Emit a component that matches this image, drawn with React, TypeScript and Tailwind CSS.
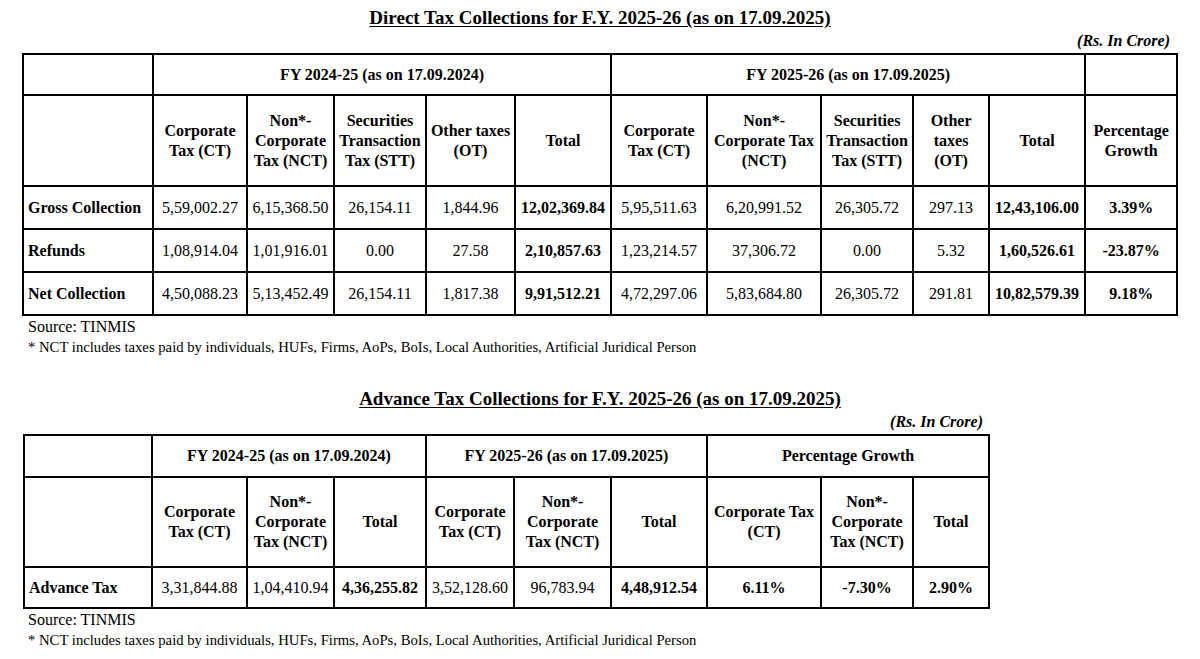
const serif = { fontFamily: '"Liberation Serif", "Times New Roman", serif' };

const td = 'border-2 border-black text-center align-middle p-0';
const th = 'border-2 border-black text-center align-middle font-bold p-0 leading-[20px]';

const directRows = [
    {
        label: 'Gross Collection',
        a: ['5,59,002.27', '6,15,368.50', '26,154.11', '1,844.96'],
        aTotal: '12,02,369.84',
        b: ['5,95,511.63', '6,20,991.52', '26,305.72', '297.13'],
        bTotal: '12,43,106.00',
        growth: '3.39%',
    },
    {
        label: 'Refunds',
        a: ['1,08,914.04', '1,01,916.01', '0.00', '27.58'],
        aTotal: '2,10,857.63',
        b: ['1,23,214.57', '37,306.72', '0.00', '5.32'],
        bTotal: '1,60,526.61',
        growth: '-23.87%',
    },
    {
        label: 'Net Collection',
        a: ['4,50,088.23', '5,13,452.49', '26,154.11', '1,817.38'],
        aTotal: '9,91,512.21',
        b: ['4,72,297.06', '5,83,684.80', '26,305.72', '291.81'],
        bTotal: '10,82,579.39',
        growth: '9.18%',
    },
];

function Notes() {
    return (
        <div className="pl-[28px] leading-[21px] text-black">
            <p className="text-[16px]">Source: TINMIS</p>
            <p className="text-[14.7px]">* NCT includes taxes paid by individuals, HUFs, Firms, AoPs, BoIs, Local Authorities, Artificial Juridical Person</p>
        </div>
    );
}

export default function App() {
    return (
        <div className="w-[1200px] h-[659px] bg-white text-black overflow-hidden" style={serif}>
            {/* Direct tax */}
            <h1 className="pt-[7px] text-center text-[19px] leading-[22px] font-bold underline underline-offset-2">
                Direct Tax Collections for F.Y. 2025-26 (as on 17.09.2025)
            </h1>
            <div className="w-[1176px] text-right text-[16px] leading-[24px] font-bold italic pr-[6px]">(Rs. In Crore)</div>
            <table className="ml-[22px] w-[1154px] table-fixed border-collapse text-[16px]">
                <colgroup>
                    <col className="w-[130px]" />
                    <col className="w-[94px]" />
                    <col className="w-[87px]" />
                    <col className="w-[92px]" />
                    <col className="w-[89px]" />
                    <col className="w-[96px]" />
                    <col className="w-[96px]" />
                    <col className="w-[114px]" />
                    <col className="w-[92px]" />
                    <col className="w-[76px]" />
                    <col className="w-[96px]" />
                    <col className="w-[92px]" />
                </colgroup>
                <thead>
                    <tr className="h-[41px]">
                        <th className={th}></th>
                        <th className={th} colSpan={5}>FY 2024-25 (as on 17.09.2024)</th>
                        <th className={th} colSpan={5}>FY 2025-26 (as on 17.09.2025)</th>
                        <th className={th}></th>
                    </tr>
                    <tr className="h-[91px]">
                        <th className={th}></th>
                        <th className={th}>Corporate<br />Tax (CT)</th>
                        <th className={th}>Non*-<br />Corporate<br />Tax (NCT)</th>
                        <th className={th}>Securities<br />Transaction<br />Tax (STT)</th>
                        <th className={th}>Other taxes<br />(OT)</th>
                        <th className={th}>Total</th>
                        <th className={th}>Corporate<br />Tax (CT)</th>
                        <th className={th}>Non*-<br />Corporate Tax<br />(NCT)</th>
                        <th className={th}>Securities<br />Transaction<br />Tax (STT)</th>
                        <th className={th}>Other<br />taxes<br />(OT)</th>
                        <th className={th}>Total</th>
                        <th className={th}>Percentage<br />Growth</th>
                    </tr>
                </thead>
                <tbody>
                    {directRows.map((r) => (
                        <tr key={r.label} className="h-[43px]">
                            <td className={`${td} text-left font-bold pl-[4px]`}>{r.label}</td>
                            {r.a.map((v, i) => (
                                <td key={'a' + i} className={td}>{v}</td>
                            ))}
                            <td className={`${td} font-bold`}>{r.aTotal}</td>
                            {r.b.map((v, i) => (
                                <td key={'b' + i} className={td}>{v}</td>
                            ))}
                            <td className={`${td} font-bold`}>{r.bTotal}</td>
                            <td className={`${td} font-bold`}>{r.growth}</td>
                        </tr>
                    ))}
                </tbody>
            </table>
            <Notes />

            {/* Advance tax */}
            <h2 className="mt-[30px] text-center text-[19px] leading-[22px] font-bold underline underline-offset-2">
                Advance Tax Collections for F.Y. 2025-26 (as on 17.09.2025)
            </h2>
            <div className="w-[988px] text-right text-[16px] leading-[24px] font-bold italic pr-[5px]">(Rs. In Crore)</div>
            <table className="ml-[23px] w-[965px] table-fixed border-collapse text-[16px]">
                <colgroup>
                    <col className="w-[128px]" />
                    <col className="w-[95px]" />
                    <col className="w-[87px]" />
                    <col className="w-[92px]" />
                    <col className="w-[88px]" />
                    <col className="w-[97px]" />
                    <col className="w-[96px]" />
                    <col className="w-[114px]" />
                    <col className="w-[92px]" />
                    <col className="w-[76px]" />
                </colgroup>
                <thead>
                    <tr className="h-[42px]">
                        <th className={th}></th>
                        <th className={th} colSpan={3}>FY 2024-25 (as on 17.09.2024)</th>
                        <th className={th} colSpan={3}>FY 2025-26 (as on 17.09.2025)</th>
                        <th className={th} colSpan={3}>Percentage Growth</th>
                    </tr>
                    <tr className="h-[90px]">
                        <th className={th}></th>
                        <th className={th}>Corporate<br />Tax (CT)</th>
                        <th className={th}>Non*-<br />Corporate<br />Tax (NCT)</th>
                        <th className={th}>Total</th>
                        <th className={th}>Corporate<br />Tax (CT)</th>
                        <th className={th}>Non*-<br />Corporate<br />Tax (NCT)</th>
                        <th className={th}>Total</th>
                        <th className={th}>Corporate Tax<br />(CT)</th>
                        <th className={th}>Non*-<br />Corporate<br />Tax (NCT)</th>
                        <th className={th}>Total</th>
                    </tr>
                </thead>
                <tbody>
                    <tr className="h-[41px]">
                        <td className={`${td} text-left font-bold pl-[4px]`}>Advance Tax</td>
                        <td className={td}>3,31,844.88</td>
                        <td className={td}>1,04,410.94</td>
                        <td className={`${td} font-bold`}>4,36,255.82</td>
                        <td className={td}>3,52,128.60</td>
                        <td className={td}>96,783.94</td>
                        <td className={`${td} font-bold`}>4,48,912.54</td>
                        <td className={`${td} font-bold`}>6.11%</td>
                        <td className={`${td} font-bold`}>-7.30%</td>
                        <td className={`${td} font-bold`}>2.90%</td>
                    </tr>
                </tbody>
            </table>
            <Notes />
        </div>
    );
}
